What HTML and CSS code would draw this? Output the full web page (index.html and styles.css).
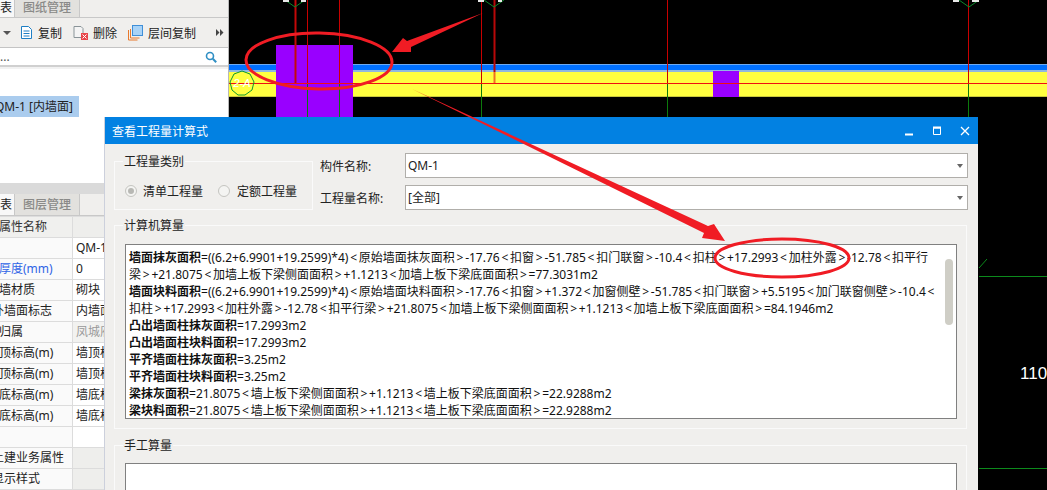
FILE: index.html
```html
<!DOCTYPE html>
<html lang="zh-CN">

<head>
    <meta charset="UTF-8">
    <title>查看工程量计算式</title>
    <link rel="stylesheet" href="styles.css">
</head>

<body>
    <div class="side">
        <div class="tabs top-tabs">
            <span class="tab-cut">表</span>
            <span class="tab">图纸管理</span>
        </div>
        <div class="toolbar">
            <span class="caret"></span>
            <span class="tool tool-copy">
                <svg width="13" height="15" viewBox="0 0 13 15"><path d="M1.500 1.500h7l3 3v9h-10z" fill="#fff" stroke="#1f7fc4"/><path d="M3.500 6h6M3.500 8.500h6M3.500 11h6" stroke="#1f7fc4"/></svg>
                复制
            </span>
            <span class="tool tool-del">
                <svg width="16" height="16" viewBox="0 0 16 16"><path d="M1 1.500h7l2 2v9H1z" fill="#f4f4f4" stroke="#8a9498"/><rect x="8" y="8" width="7" height="7" fill="#e8464a"/><path d="M9.500 9.500l4 4M13.500 9.500l-4 4" stroke="#fff"/></svg>
                删除
            </span>
            <span class="tool tool-floor">
                <svg width="15" height="16" viewBox="0 0 15 16"><path d="M.5 5v10h9M2.500 4v9h9" fill="none" stroke="#e8792c"/><rect x="4.500" y=".5" width="10" height="10" fill="#a9d3f7" stroke="#3f8fd8"/></svg>
                层间复制
            </span>
            <svg class="more" width="8" height="7" viewBox="0 0 8 7"><path d="M0 0l3.500 3.500L0 7zM4 0l3.500 3.500L4 7z" fill="#444"/></svg>
        </div>
        <div class="search">
            <span>...</span>
            <svg width="12" height="12" viewBox="0 0 12 12"><circle cx="5" cy="5" r="3.500" fill="none" stroke="#2f8fc4" stroke-width="1.600"/><path d="M7.800 7.800l3.400 3.400" stroke="#2f8fc4" stroke-width="2"/></svg>
        </div>
        <div class="tree">
            <div class="tree-item">QM-1 [内墙面]</div>
        </div>
        <div class="split"></div>
        <div class="tabs prop-tabs">
            <span class="tab-cut">表</span>
            <span class="tab">图层管理</span>
        </div>
        <div class="props">
            <div class="row head"><span class="name">属性名称</span><span class="val"></span></div>
            <div class="row"><span class="name"></span><span class="val">QM-1</span></div>
            <div class="row"><span class="name link">厚度(mm)</span><span class="val">0</span></div>
            <div class="row"><span class="name">墙材质</span><span class="val">砌块</span></div>
            <div class="row"><span class="name cut">外墙面标志</span><span class="val">内墙面</span></div>
            <div class="row"><span class="name">归属</span><span class="val off">凤城府</span></div>
            <div class="row"><span class="name">顶标高(m)</span><span class="val">墙顶标高</span></div>
            <div class="row"><span class="name">顶标高(m)</span><span class="val">墙顶标高</span></div>
            <div class="row"><span class="name">底标高(m)</span><span class="val">墙底标高</span></div>
            <div class="row"><span class="name">底标高(m)</span><span class="val">墙底标高</span></div>
            <div class="row"><span class="name"></span><span class="val"></span></div>
            <div class="row"><span class="name cut">土建业务属性</span><span class="val grey"></span></div>
            <div class="row"><span class="name cut">显示样式</span><span class="val grey"></span></div>
        </div>
    </div>

    <div class="cad">
        <svg class="cad-draw" width="818" height="490" viewBox="229 0 818 490">
            <rect x="229" y="64" width="818" height="8" fill="#0070ff"/>
            <rect x="229" y="64" width="818" height="1" fill="#6eaaf0"/>
            <rect x="229" y="70" width="818" height="2" fill="#90b8e0"/>
            <rect x="229" y="72" width="818" height="24" fill="#ffff40"/>
            <rect x="229" y="96" width="818" height="1" fill="#c8c83c"/>
            <rect x="276" y="45" width="77" height="75" fill="#9900ff"/>
            <rect x="713" y="71" width="26" height="26" fill="#9900ff"/>
            <path d="M295.500 0v83" stroke="#c40808" stroke-width="2"/>
            <path d="M307.500 0v83M339.500 0v83M481.500 0v83M667.500 0v83M968.500 0v83" stroke="#c80000"/>
            <path d="M494.500 0v72" stroke="#b80808" stroke-width="2"/>
            <path d="M494.500 72v11" stroke="#f07020" stroke-width="2"/>
            <path d="M307.500 83v37M339.500 83v37M481.500 83v37M667.500 83v37M968.500 83v37" stroke="#0c7a0c"/>
            <path d="M229 83.500h818" stroke="#f01010"/>
            <path d="M285 0l10 7 10-7M484 0l10 7 10-7M959 0l10 7 10-7" fill="none" stroke="#0c8a2c"/>
            <path d="M283 0h6v2h-6zM301 0h5v2h-5zM478 0h6v2h-6zM498 0h4v2h-4zM953 0h6v2h-6zM972 0h7v2h-7z" fill="#e8e8e8"/>
            <path d="M242 71l8 3 4 8-2 8-7 5h-7l-6-5-2-8 4-8z" fill="none" stroke="#0c9a2c"/>
            <text class="axis" x="242" y="87">2-A</text>
            <path d="M979 268l8-9M979 276.500h68M979 468.500h68" fill="none" stroke="#0c8a1c"/>
            <text class="dim" x="1020" y="379">110</text>
        </svg>
    </div>

    <div class="dialog">
        <div class="title">
            <span>查看工程量计算式</span>
            <div class="win-btns">
                <svg width="10" height="10" viewBox="0 0 10 10"><path d="M1 8.500h8" stroke="#fff" stroke-width="2"/></svg>
                <svg width="10" height="10" viewBox="0 0 10 10"><path d="M1.500 2v6.500h7V2z" fill="none" stroke="#fff"/><path d="M1 1.500h8" stroke="#fff" stroke-width="2"/></svg>
                <svg width="10" height="10" viewBox="0 0 10 10"><path d="M1 1l8 8M9 1l-8 8" stroke="#fff" stroke-width="1.300"/></svg>
            </div>
        </div>
        <div class="dialog-body">
            <div class="top-row">
                <fieldset class="group kind">
                    <legend>工程量类别</legend>
                    <div class="radios">
                        <span class="radio on"></span><span class="radio-text">清单工程量</span>
                        <span class="radio"></span><span class="radio-text">定额工程量</span>
                    </div>
                </fieldset>
                <div class="fields">
                    <div class="field">
                        <label>构件名称:</label>
                        <div class="select">QM-1<span class="arrow"></span></div>
                    </div>
                    <div class="field">
                        <label>工程量名称:</label>
                        <div class="select">[全部]<span class="arrow"></span></div>
                    </div>
                </div>
            </div>
            <fieldset class="group calc">
                <legend>计算机算量</legend>
                <div class="formula">
                    <div><b>墙面抹灰面积</b>=((6.2+6.9901+19.2599)*4)<i>&lt;</i>原始墙面抹灰面积<i>&gt;</i>-17.76<i>&lt;</i>扣窗<i>&gt;</i>-51.785<i>&lt;</i>扣门联窗<i>&gt;</i>-10.4<i>&lt;</i>扣柱<i>&gt;</i>+17.2993<i>&lt;</i>加柱外露<i>&gt;</i>-12.78<i>&lt;</i>扣平行</div>
                    <div>梁<i>&gt;</i>+21.8075<i>&lt;</i>加墙上板下梁侧面面积<i>&gt;</i>+1.1213<i>&lt;</i>加墙上板下梁底面面积<i>&gt;</i>=77.3031m2</div>
                    <div><b>墙面块料面积</b>=((6.2+6.9901+19.2599)*4)<i>&lt;</i>原始墙面块料面积<i>&gt;</i>-17.76<i>&lt;</i>扣窗<i>&gt;</i>+1.372<i>&lt;</i>加窗侧壁<i>&gt;</i>-51.785<i>&lt;</i>扣门联窗<i>&gt;</i>+5.5195<i>&lt;</i>加门联窗侧壁<i>&gt;</i>-10.4<i>&lt;</i></div>
                    <div>扣柱<i>&gt;</i>+17.2993<i>&lt;</i>加柱外露<i>&gt;</i>-12.78<i>&lt;</i>扣平行梁<i>&gt;</i>+21.8075<i>&lt;</i>加墙上板下梁侧面面积<i>&gt;</i>+1.1213<i>&lt;</i>加墙上板下梁底面面积<i>&gt;</i>=84.1946m2</div>
                    <div><b>凸出墙面柱抹灰面积</b>=17.2993m2</div>
                    <div><b>凸出墙面柱块料面积</b>=17.2993m2</div>
                    <div><b>平齐墙面柱抹灰面积</b>=3.25m2</div>
                    <div><b>平齐墙面柱块料面积</b>=3.25m2</div>
                    <div><b>梁抹灰面积</b>=21.8075<i>&lt;</i>墙上板下梁侧面面积<i>&gt;</i>+1.1213<i>&lt;</i>墙上板下梁底面面积<i>&gt;</i>=22.9288m2</div>
                    <div><b>梁块料面积</b>=21.8075<i>&lt;</i>墙上板下梁侧面面积<i>&gt;</i>+1.1213<i>&lt;</i>墙上板下梁底面面积<i>&gt;</i>=22.9288m2</div>
                    <span class="scroll-thumb"></span>
                </div>
            </fieldset>
            <fieldset class="group manual">
                <legend>手工算量</legend>
                <div class="manual-box"></div>
            </fieldset>
        </div>
    </div>

    <svg class="marks" width="1047" height="490" viewBox="0 0 1047 490">
        <ellipse cx="319" cy="61" rx="73" ry="28" fill="none" stroke="#f01c24" stroke-width="3" transform="rotate(1 319 61)"/>
        <path d="M483 13L407 41 403 38 392 52 411 52 411 47z" fill="#f01c24"/>
        <path d="M412 89L708 226 714 224 725 241 702 238 704 233z" fill="#f01c24"/>
        <ellipse cx="782" cy="258" rx="67" ry="19" fill="none" stroke="#f01c24" stroke-width="3"/>
    </svg>
</body>

</html>
```
FILE: styles.css
```css
* {
    box-sizing: border-box;
}

body {
    margin: 0;
    width: 1047px;
    height: 490px;
    display: flex;
    overflow: hidden;
    position: relative;
    background-color: #000;
    font-family: "Noto Sans", "Noto Sans CJK SC", sans-serif;
    font-size: 12px;
    color: #222;
}

/* left panel */
.side {
    width: 229px;
    height: 490px;
    flex-shrink: 0;
    overflow: hidden;
    background-color: #fff;
    border-right: 1px solid #b8b8b8;
}

.tabs {
    display: flex;
    background-color: #f0efed;
    border-bottom: 1px solid #c8c8c8;
}

.top-tabs {
    height: 18px;
    line-height: 16px;
}

.prop-tabs {
    height: 22px;
    line-height: 22px;
}

.tab-cut {
    width: 15px;
    padding-right: 2px;
    border-right: 1px solid #c8c8c8;
    background-color: #f8f8f8;
    text-align: right;
}

.tab {
    width: 65px;
    text-align: center;
    color: #8a8a88;
    font-weight: 500;
    background-color: #e2e1de;
    border-right: 1px solid #c8c8c8;
}

.toolbar {
    height: 30px;
    display: flex;
    align-items: center;
    background-color: #f0efed;
    border-bottom: 1px solid #c4c4c4;
}

.caret {
    margin-left: 3px;
    width: 0;
    height: 0;
    border-left: 4px solid transparent;
    border-right: 4px solid transparent;
    border-top: 4px solid #555;
}

.tool {
    display: flex;
    align-items: center;
    gap: 5px;
}

.tool-copy {
    margin-left: 9px;
}

.tool-del {
    margin-left: 11px;
    gap: 4px;
}

.tool-floor {
    margin-left: 11px;
}

.more {
    margin-left: 20px;
}

.search {
    height: 19px;
    display: flex;
    align-items: center;
    justify-content: space-between;
    padding-right: 11px;
    color: #555;
    border-bottom: 2px solid #d0d0d0;
    background-color: #fff;
}

.tree {
    height: 116px;
    padding-top: 27px;
    border-top: 2px solid #f2f2f2;
}

.tree-item {
    width: 79px;
    height: 21px;
    line-height: 21px;
    white-space: nowrap;
    overflow: hidden;
    background-color: #aaccee;
    text-indent: -5px;
}

.split {
    height: 11px;
    background-color: #dadada;
}

.props {
    border-top: 1px solid #ddd;
}

.row {
    display: flex;
    height: 21px;
    line-height: 20px;
    border-bottom: 1px solid #dcdcdc;
    white-space: nowrap;
}

.name {
    width: 73px;
    padding-left: 1px;
    overflow: hidden;
    text-indent: -2px;
    border-right: 1px solid #dcdcdc;
    background-color: #fafafa;
}

.name.cut {
    text-indent: -9px;
}

.link {
    color: #2f64e6;
}

.val {
    flex: 1;
    padding-left: 3px;
    overflow: hidden;
}

.head .name {
    background-color: #f0f0ee;
    color: #333;
}

.head .val,
.val.grey {
    background-color: #eeeeec;
}

.val.off {
    color: #999;
    background-color: #f2f2f0;
}

/* cad view */
.cad {
    flex: 1;
    height: 490px;
    overflow: hidden;
}

.cad-draw {
    display: block;
}

.axis {
    fill: #fff;
    font-family: "Liberation Sans", sans-serif;
    font-size: 11px;
    font-style: italic;
    text-anchor: middle;
}

.dim {
    fill: #fff;
    font-family: "Liberation Sans", sans-serif;
    font-size: 17px;
}

/* dialog */
.dialog {
    position: absolute;
    left: 104px;
    top: 117px;
    width: 874px;
    height: 373px;
    overflow: hidden;
    background-color: #f0efed;
    border-left: 1px solid #ccd0dc;
}

.title {
    height: 27px;
    display: flex;
    align-items: center;
    justify-content: space-between;
    padding-left: 7px;
    color: #fff;
    background-color: #0281e2;
}

.win-btns {
    display: flex;
    gap: 18px;
    padding-right: 8px;
}

.dialog-body {
    padding: 9px 10px 0 9px;
}

.top-row {
    display: flex;
}

.group {
    margin: 0;
    min-width: 0;
    border: 1px solid #fafafa;
    padding: 0;
}

.group legend {
    margin-left: 8px;
    padding: 0 1px;
    line-height: 17px;
}

.kind {
    width: 199px;
    height: 57px;
}

.radios {
    display: flex;
    align-items: center;
    padding: 12px 0 0 10px;
}

.radio {
    width: 12px;
    height: 12px;
    border: 1px solid #c4c4c0;
    border-radius: 50%;
    background-color: #f4f4f2;
    position: relative;
}

.radio.on::before {
    content: '';
    position: absolute;
    top: 2px;
    left: 2px;
    width: 6px;
    height: 6px;
    border-radius: 50%;
    background-color: #b8b8b4;
}

.radio-text {
    margin: 0 14px 0 6px;
}

.radio-text:nth-child(2) {
    margin-right: 15px;
}

.radio-text:last-child {
    margin-left: 7px;
}

.fields {
    flex: 1;
    padding-left: 7px;
}

.field {
    display: flex;
    align-items: center;
    margin-bottom: 7px;
}

.field label {
    width: 85px;
}

.select {
    width: 563px;
    height: 25px;
    line-height: 23px;
    padding-left: 2px;
    background-color: #fff;
    border: 1px solid #b0aeaa;
    position: relative;
}

.arrow {
    position: absolute;
    right: 4px;
    top: 10px;
    width: 0;
    height: 0;
    border-left: 3px solid transparent;
    border-right: 3px solid transparent;
    border-top: 4px solid #666;
}

.calc {
    width: 853px;
    height: 212px;
    padding: 10px 9px 0 10px;
}

.calc legend,
.manual legend {
    margin-left: -2px;
}

.formula {
    height: 175px;
    padding: 4px 0 0 3px;
    line-height: 17px;
    white-space: nowrap;
    overflow: hidden;
    background-color: #fff;
    border: 1px solid #808080;
    position: relative;
    color: #111;
}

.formula b {
    font-weight: 700;
}

/* the angle brackets sit wider in the original font */
.formula i {
    font-style: normal;
    padding: 0 1.75px;
}

.scroll-thumb {
    position: absolute;
    right: 3px;
    top: 14px;
    width: 8px;
    height: 66px;
    border-radius: 4px;
    background-color: #cfcec6;
}

.manual {
    width: 853px;
    height: 80px;
    margin-top: 8px;
    padding: 9px 9px 0 10px;
}

.manual-box {
    height: 60px;
    background-color: #fff;
    border: 1px solid #808080;
}

.marks {
    position: absolute;
    left: 0;
    top: 0;
    pointer-events: none;
}
```
